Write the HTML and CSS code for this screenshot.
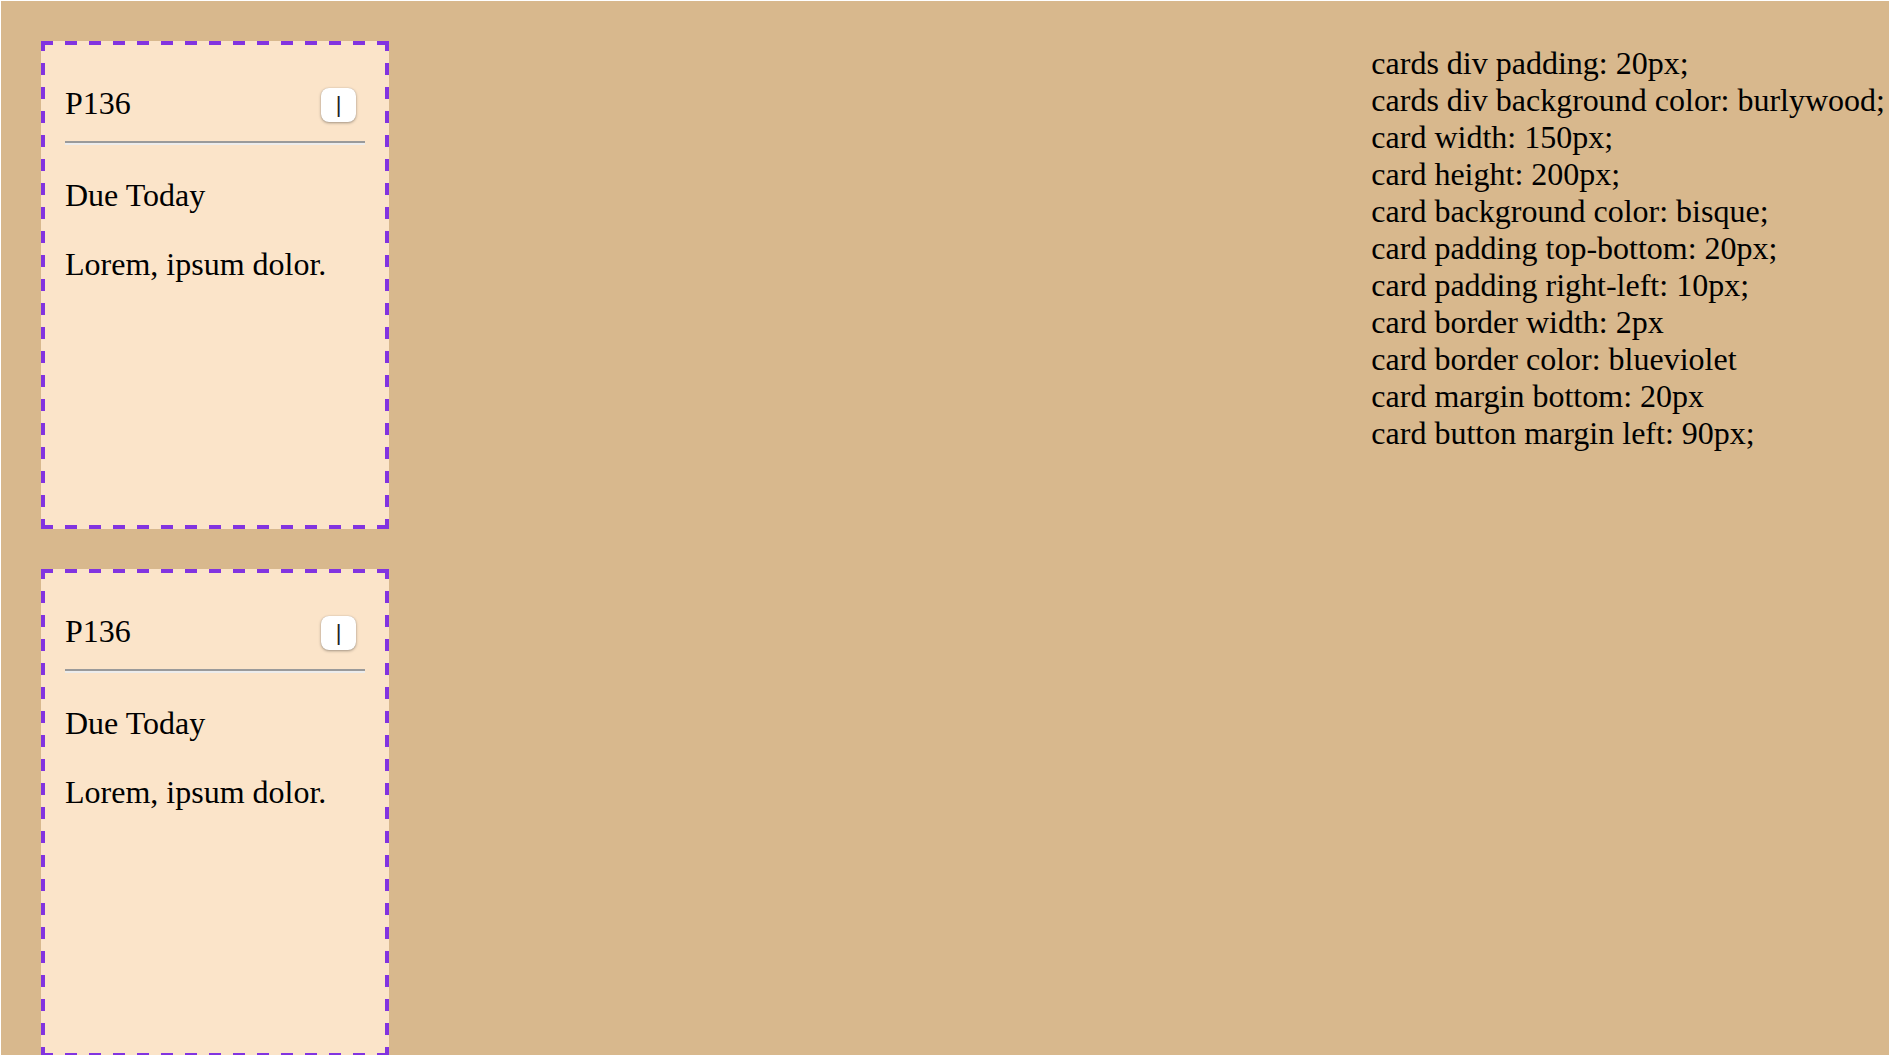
FILE: index.html
```html
<!DOCTYPE html>
<html lang="en">
<head>
<meta charset="utf-8">
<title>Cards</title>
<link rel="stylesheet" href="styles.css">
</head>
<body>
<div class="page">
  <div class="cards">
    <div class="card">
      <div class="card-head">
        <span class="card-title">P136</span>
        <button class="card-btn">|</button>
      </div>
      <hr class="card-rule">
      <p class="card-text">Due Today</p>
      <p class="card-text">Lorem, ipsum dolor.</p>
    </div>
    <div class="card">
      <div class="card-head">
        <span class="card-title">P136</span>
        <button class="card-btn">|</button>
      </div>
      <hr class="card-rule">
      <p class="card-text">Due Today</p>
      <p class="card-text">Lorem, ipsum dolor.</p>
    </div>
  </div>
  <div class="notes">
    <div class="note">cards div padding: 20px;</div>
    <div class="note">cards div background color: burlywood;</div>
    <div class="note">card width: 150px;</div>
    <div class="note">card height: 200px;</div>
    <div class="note">card background color: bisque;</div>
    <div class="note">card padding top-bottom: 20px;</div>
    <div class="note">card padding right-left: 10px;</div>
    <div class="note">card border width: 2px</div>
    <div class="note">card border color: blueviolet</div>
    <div class="note">card margin bottom: 20px</div>
    <div class="note">card button margin left: 90px;</div>
  </div>
</div>
</body>
</html>
```
FILE: styles.css
```css
html, body {
  margin: 0;
  padding: 0;
  background: #ffffff;
}
body {
  padding: 1px 8px 0 1px;
  font-family: "Liberation Serif", "Times New Roman", serif;
  font-size: 32px;
  line-height: 37px;
  color: #000;
}
.page {
  background: #d8b88d;
  padding: 40px 4px 40px 40px;
  display: flex;
  justify-content: space-between;
  align-items: flex-start;
}
.cards {
  display: flex;
  flex-direction: column;
}
.card {
  width: 300px;
  height: 400px;
  padding: 44px 24px;
  margin-bottom: 40px;
  background:
    repeating-linear-gradient(90deg, #8234e0 0 12px, transparent 12px 24px) left top / 100% 4px no-repeat,
    repeating-linear-gradient(90deg, #8234e0 0 12px, transparent 12px 24px) left bottom / 100% 4px no-repeat,
    repeating-linear-gradient(180deg, #8234e0 0 10px, transparent 10px 22px, #8234e0 22px 24px) left top / 4px 100% no-repeat,
    repeating-linear-gradient(180deg, #8234e0 0 10px, transparent 10px 22px, #8234e0 22px 24px) right top / 4px 100% no-repeat,
    #fbe4c9;
}
.card-head {
  display: flex;
  align-items: flex-start;
  height: 41px;
}
.card-title {
  display: block;
  width: 66px;
}
.card-btn {
  margin: 3px 0 0 190px;
  width: 35px;
  height: 34px;
  padding: 0;
  border: none;
  border-radius: 8px;
  background: #ffffff;
  box-shadow: 0 1px 3px rgba(0, 0, 0, 0.35), 0 0 1px rgba(0, 0, 0, 0.2);
  font-family: "Liberation Sans", Arial, sans-serif;
  font-size: 22px;
  line-height: 34px;
  color: #222;
  text-align: center;
}
.card-rule {
  margin: 15px 0 32px;
  height: 0;
  border: none;
  border-top: 2px solid #9a9a9a;
  border-bottom: 2px solid #ececec;
}
.card-text {
  margin: 0 0 32px;
}
.notes {
  padding-top: 4px;
}
.note {
  white-space: nowrap;
}
```
